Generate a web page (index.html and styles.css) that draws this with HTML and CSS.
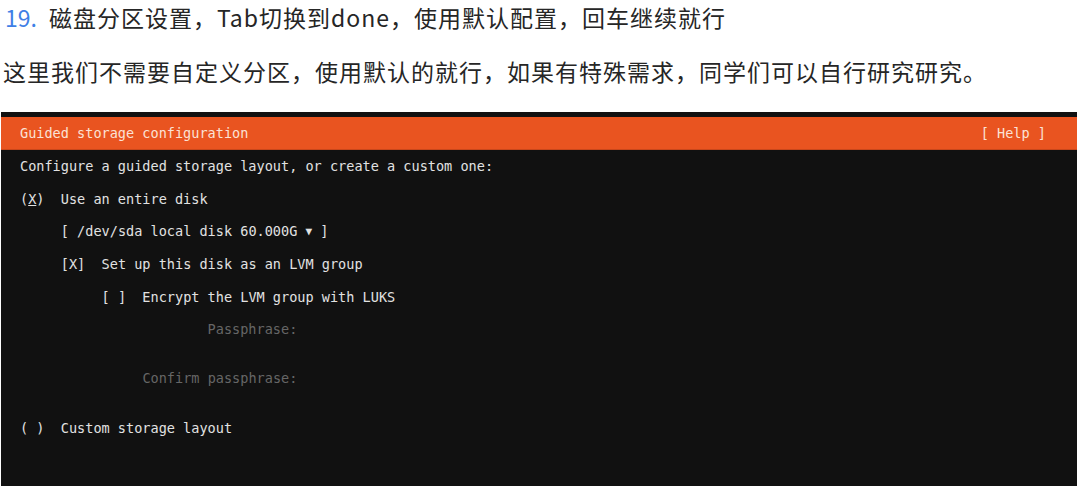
FILE: index.html
```html
<!DOCTYPE html>
<html lang="zh-CN">
<head>
<meta charset="utf-8">
<link rel="stylesheet" href="styles.css">
</head>
<body>
<div class="article">
  <p class="step"><span class="num">19.</span>磁盘分区设置，Tab切换到done，使用默认配置，回车继续就行</p>
  <p class="desc">这里我们不需要自定义分区，使用默认的就行，如果有特殊需求，同学们可以自行研究研究。</p>
  <div class="screen">
    <div class="bar">
      <span class="title">Guided storage configuration</span>
      <span class="help">[ Help ]</span>
    </div>
    <div class="term">
      <div class="line">Configure a guided storage layout, or create a custom one:</div>
      <div class="line">(<span class="ul">X</span>)  Use an entire disk</div>
      <div class="line ind5">[ /dev/sda local disk 60.000G <span class="tri">▼</span> ]</div>
      <div class="line ind5">[X]  Set up this disk as an LVM group</div>
      <div class="line ind10">[ ]  Encrypt the LVM group with LUKS</div>
      <div class="line tall ind23 dim">Passphrase:</div>
      <div class="line tall ind15 dim">Confirm passphrase:</div>
      <div class="line">( )  Custom storage layout</div>
      <div class="line"></div>
    </div>
  </div>
</div>
</body>
</html>
```
FILE: styles.css
```css
html, body {
  margin: 0;
  padding: 0;
  background: #ffffff;
  overflow: hidden;
}

.article {
  font-family: "Noto Sans CJK SC", "Noto Sans", sans-serif;
  color: #262626;
}

.step {
  margin: 0;
  padding: 1px 0 0 5px;
  height: 52px;
  font-size: 23px;
  line-height: 32px;
  letter-spacing: 1px;
}

.num {
  color: #3f7fe6;
  margin-right: 12px;
  letter-spacing: 0;
}

.desc {
  margin: 0;
  padding: 0 0 0 3px;
  height: 59px;
  font-size: 23px;
  line-height: 36px;
  letter-spacing: 1px;
}

.screen {
  margin-left: 1px;
  background: #111111;
  padding-top: 5px;
  height: 369px;
}

.bar {
  display: flex;
  justify-content: space-between;
  align-items: center;
  background: #e95420;
  height: 32px;
  border-bottom: 1px solid #c9471b;
  padding: 0 31px 0 19px;
  font-family: "DejaVu Sans Mono", monospace;
  font-size: 13.55px;
  color: #fbe2d6;
  white-space: pre;
}

.term {
  font-family: "DejaVu Sans Mono", monospace;
  font-size: 13.55px;
  color: #e2e2e2;
  padding-left: 19px;
}

.line {
  height: 32.7px;
  line-height: 32.7px;
  white-space: pre;
}

.line.tall {
  height: 49.05px;
  line-height: 32.7px;
}

.ind5 { padding-left: 40.8px; }
.ind10 { padding-left: 81.6px; }
.ind15 { padding-left: 122.4px; }
.ind23 { padding-left: 187.6px; }

.dim { color: #666666; }

.ul { text-decoration: underline; }

.tri { font-size: 11px; vertical-align: 1px; }
```
